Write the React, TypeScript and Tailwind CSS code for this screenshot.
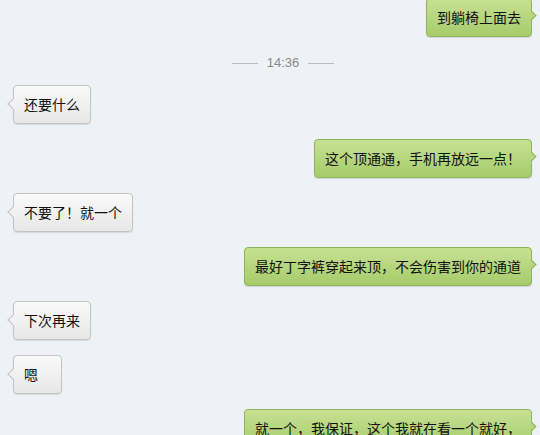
// chat window: a conversation with sent (green) and received (grey) bubbles

import React from "react";

interface Message {
  id: number;
  mine: boolean;
  text: string;
}

const messages: Message[] = [
  { id: 2, mine: false, text: "还要什么" },
  { id: 3, mine: true, text: "这个顶通通，手机再放远一点！" },
  { id: 4, mine: false, text: "不要了！就一个" },
  { id: 5, mine: true, text: "最好丁字裤穿起来顶，不会伤害到你的通道" },
  { id: 6, mine: false, text: "下次再来" },
  { id: 7, mine: false, text: "嗯" },
  { id: 8, mine: true, text: "就一个，我保证，这个我就在看一个就好，" },
];

// one speech bubble with its little tail
const Bubble = ({ mine, text }: { mine: boolean; text: string }) => {
  if (mine) {
    return (
      <div className="flex justify-end pr-[8px]">
        <div className="relative flex h-[39px] min-w-[49px] items-center rounded-[4px] border border-[#8fb45a] bg-gradient-to-b from-[#c6e193] to-[#a7cb6b] px-[10px] text-[14px] text-[#111] shadow-[0_1px_1px_rgba(0,0,0,0.12)]">
          <span className="relative z-10 whitespace-nowrap">{text}</span>
          <span className="absolute right-[-4px] top-[13px] h-[7px] w-[7px] rotate-45 border-r border-t border-[#8fb45a] bg-[#b6d67f]" />
        </div>
      </div>
    );
  }
  return (
    <div className="flex justify-start pl-[13px]">
      <div className="relative flex h-[39px] min-w-[49px] items-center rounded-[4px] border border-[#c3c3c3] bg-gradient-to-b from-[#fafafa] to-[#e7e7e7] px-[10px] text-[14px] text-[#111] shadow-[0_1px_1px_rgba(0,0,0,0.1)]">
        <span className="relative z-10 whitespace-nowrap">{text}</span>
        <span className="absolute left-[-5px] top-[14px] h-[8px] w-[8px] rotate-45 border-b border-l border-[#c3c3c3] bg-[#f1f1f1]" />
      </div>
    </div>
  );
};

const App = () => {
  return (
    <div
      className="h-[435px] w-[540px] overflow-hidden bg-[#eef1f6]"
      style={{ fontFamily: '"Noto Sans CJK SC", "Noto Sans", sans-serif' }}
    >
      <div className="-mt-[2px]">
        <Bubble mine={true} text="到躺椅上面去" />
      </div>

      {/* time divider */}
      <div className="mt-[16px] mb-[12px] flex h-[20px] items-center justify-center gap-[9px] pl-[26px]">
        <span className="h-px w-[26px] bg-[#b9bcc2]" />
        <span
          className="text-[13px] text-[#8a8a8a]"
          style={{ fontFamily: '"Liberation Sans", Arial, sans-serif' }}
        >
          14:36
        </span>
        <span className="h-px w-[26px] bg-[#b9bcc2]" />
      </div>

      <div className="flex flex-col gap-[15px]">
        {messages.map((m) => (
          <Bubble key={m.id} mine={m.mine} text={m.text} />
        ))}
      </div>
    </div>
  );
};

export default App;
